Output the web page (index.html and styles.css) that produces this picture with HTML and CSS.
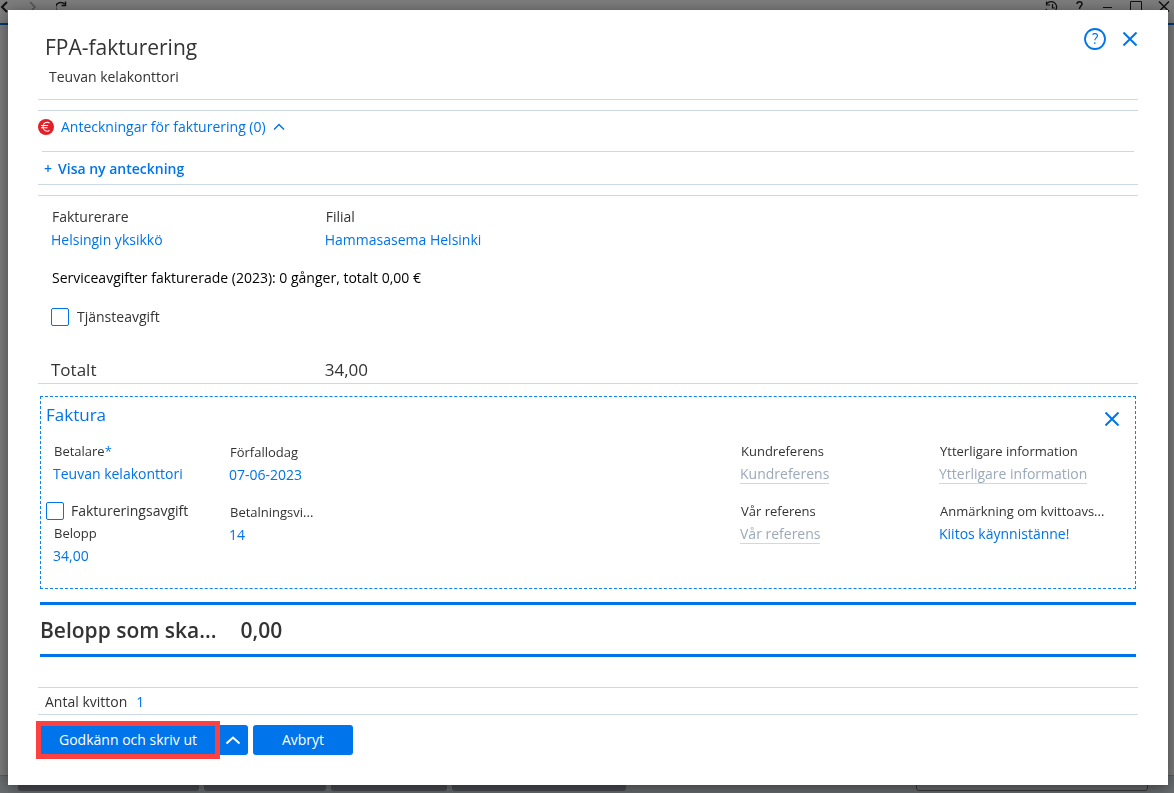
FILE: index.html
```html
<!DOCTYPE html>
<html lang="sv">
<head>
<meta charset="UTF-8">
<meta name="viewport" content="width=device-width, initial-scale=1">
<title>FPA-fakturering</title>
<link rel="stylesheet" href="styles.css">
</head>
<body>
    <!-- Application window behind the dialog -->
    <div class="app">
        <div class="toolbar">
            <div class="toolbar-nav">
                <svg width="14" height="14" viewBox="0 0 14 14"><path d="M7 2 2 7l5 5" stroke-width="2"/></svg>
                <svg class="muted" width="14" height="14" viewBox="0 0 14 14"><path d="m2 2 5 5-5 5"/></svg>
                <svg width="14" height="14" viewBox="0 0 14 14"><path d="M8.500 11.500A5.300 5.300 0 1 1 8.500 4M9.500 1.500v4H5.500"/></svg>
            </div>
            <div class="toolbar-window">
                <svg width="14" height="14" viewBox="0 0 14 14"><path d="M3 3.500A5.500 5.500 0 1 1 2 9M2.500 1.500V5H6M8.500 4v4H11" stroke-width="1.200"/></svg>
                <svg width="14" height="14" viewBox="0 0 14 14"><path d="M5 4c0-3 5-3 5-.3C10 6 7.500 6 7.500 9"/></svg>
                <svg width="14" height="14" viewBox="0 0 14 14"><path d="M3 7.500h9" stroke-width="1"/></svg>
                <svg width="14" height="14" viewBox="0 0 14 14"><path d="M2.500 1.500h11v11h-11z" stroke-width="1"/></svg>
                <svg width="14" height="14" viewBox="0 0 14 14"><path d="m3 1.500 10 10M13 1.500 3 11.500"/></svg>
            </div>
        </div>
        <div class="workspace"></div>
        <div class="taskbar">
            <div class="tab tab-1"></div>
            <div class="tab tab-2"></div>
            <div class="tab tab-3"></div>
            <div class="tab tab-4"></div>
            <div class="search-box"></div>
        </div>
    </div>

    <div class="overlay">
        <div class="dialog" role="dialog" aria-labelledby="dialog-title">
            <header class="dialog-header">
                <div>
                    <h1 id="dialog-title">FPA-fakturering</h1>
                    <p class="subtitle">Teuvan kelakonttori</p>
                </div>
                <div class="header-buttons">
                    <button type="button" class="icon-btn" aria-label="Hjälp">
                        <svg width="22" height="22" viewBox="0 0 22 22"><circle cx="11" cy="11" r="10" stroke-width="1.800"/><path d="M8.500 6.700c1.300-1.800 5-1.500 5 1 0 2-2.700 2.300-2.700 4.600M10.800 14.200v1.700" stroke-width="1.200"/></svg>
                    </button>
                    <button type="button" class="icon-btn" aria-label="Stäng">
                        <svg width="14" height="14" viewBox="0 0 14 14"><path d="m.5.5 13 13M13.500.5l-13 13" stroke-width="2"/></svg>
                    </button>
                </div>
            </header>

            <!-- Notes -->
            <section class="notes">
                <button type="button" class="notes-toggle">
                    <svg width="16" height="16" viewBox="0 0 16 16"><circle cx="8" cy="8" r="8" fill="#e3202a" stroke="none"/><path d="M11.500 4C8.500 2.300 5 4 5 7.700s3.500 5.500 6.500 3.800M3 6.500h7M3 8.800h6.500" stroke="#fff" stroke-width="1.100"/></svg>
                    <span>Anteckningar för fakturering (0)</span>
                    <svg width="12" height="8" viewBox="0 0 12 8"><path d="m1 6.500 5-5 5 5" stroke-width="1.500"/></svg>
                </button>
                <div class="notes-new">
                    <button type="button" class="link-btn"><span>+</span><span>Visa ny anteckning</span></button>
                </div>
            </section>

            <!-- Biller -->
            <section class="biller">
                <div class="biller-row">
                    <div class="field">
                        <span class="label">Fakturerare</span>
                        <a href="#" class="value">Helsingin yksikkö</a>
                    </div>
                    <div class="field">
                        <span class="label">Filial</span>
                        <a href="#" class="value">Hammasasema Helsinki</a>
                    </div>
                </div>
                <p class="service-fees">Serviceavgifter fakturerade (2023): 0 gånger, totalt 0,00 €</p>
                <label class="check"><input type="checkbox"> Tjänsteavgift</label>
                <div class="biller-row total">
                    <span>Totalt</span>
                    <span>34,00</span>
                </div>
            </section>

            <!-- Invoice -->
            <section class="invoice">
                <div class="invoice-header">
                    <h2>Faktura</h2>
                    <button type="button" class="icon-btn" aria-label="Ta bort faktura">
                        <svg width="14" height="14" viewBox="0 0 14 14"><path d="m.5.5 13 13M13.500.5l-13 13" stroke-width="2"/></svg>
                    </button>
                </div>
                <div class="invoice-grid">
                    <div class="col col-payer">
                        <div class="field small">
                            <span class="label">Betalare<span class="required">*</span></span>
                            <a href="#" class="value">Teuvan kelakonttori</a>
                        </div>
                        <label class="check"><input type="checkbox"> Faktureringsavgift</label>
                        <div class="field small">
                            <label class="label" for="amount">Belopp</label>
                            <input class="value" id="amount" type="text" value="34,00">
                        </div>
                    </div>
                    <div class="col col-dates">
                        <div class="field small">
                            <label class="label" for="due">Förfallodag</label>
                            <input class="value" id="due" type="text" value="07-06-2023">
                        </div>
                        <div class="field small">
                            <label class="label" for="terms">Betalningsvi...</label>
                            <input class="value" id="terms" type="text" value="14">
                        </div>
                    </div>
                    <div class="col">
                        <div class="field small">
                            <label class="label" for="customer-ref">Kundreferens</label>
                            <input class="value" id="customer-ref" type="text" placeholder="Kundreferens">
                        </div>
                        <div class="field small">
                            <label class="label" for="our-ref">Vår referens</label>
                            <input class="value" id="our-ref" type="text" placeholder="Vår referens">
                        </div>
                    </div>
                    <div class="col">
                        <div class="field small">
                            <label class="label" for="info">Ytterligare information</label>
                            <input class="value" id="info" type="text" placeholder="Ytterligare information">
                        </div>
                        <div class="field small">
                            <label class="label" for="remark">Anmärkning om kvittoavs...</label>
                            <input class="value" id="remark" type="text" value="Kiitos käynnistänne!">
                        </div>
                    </div>
                </div>
            </section>

            <div class="amount-due">
                <span>Belopp som ska...</span>
                <span>0,00</span>
            </div>

            <div class="receipts">
                <label for="receipts">Antal kvitton</label>
                <input class="value" id="receipts" type="text" value="1">
            </div>

            <div class="actions">
                <div class="split-btn">
                    <button type="button" class="btn btn-main">Godkänn och skriv ut</button>
                    <button type="button" class="btn btn-arrow" aria-label="Fler alternativ">
                        <svg width="16" height="10" viewBox="0 0 16 10"><path d="m1.500 8.500 6.500-6 6.500 6" stroke-width="2"/></svg>
                    </button>
                </div>
                <button type="button" class="btn btn-cancel">Avbryt</button>
            </div>
        </div>
    </div>
</body>
</html>
```
FILE: styles.css
```css
* {
    box-sizing: border-box;
}

body {
    margin: 0;
    font-family: "Open Sans", "Noto Sans", sans-serif;
    font-size: 14px;
    line-height: 20px;
    color: #333;
}

h1, h2, p {
    margin: 0;
    font-weight: 400;
}

button, input {
    font: inherit;
    color: inherit;
}

button {
    padding: 0;
    border: none;
    background: none;
    cursor: pointer;
}

svg {
    display: block;
    flex: none;
    fill: none;
    stroke: currentColor;
    stroke-width: 1.5;
}

/* Application window */
.app {
    position: fixed;
    inset: 0;
    display: flex;
    flex-direction: column;
    background-color: #fff;
    overflow: hidden;
}

.toolbar {
    display: flex;
    justify-content: space-between;
    height: 25px;
    padding: 0 4px 0 0;
    border-bottom: 2px solid #0074eb;
    color: #222;
}

.toolbar-nav,
.toolbar-window {
    display: flex;
    gap: 14px;
}

.toolbar-nav .muted {
    color: #aaa;
}

.workspace {
    flex: 1;
}

.taskbar {
    display: flex;
    gap: 5px;
    height: 18px;
    padding: 0 26px 2px 18px;
    background-color: #d6dee4;
    border-top: 1px solid #b8c3cc;
}

.tab {
    border-radius: 3px;
    background-color: #9499a6;
}

.tab-1 { width: 181px; }
.tab-2 { width: 122px; }
.tab-3 { width: 116px; }
.tab-4 { width: 174px; }

.search-box {
    width: 232px;
    margin-left: auto;
    border: 1px solid #777;
    border-radius: 3px;
}

/* Dialog */
.overlay {
    position: relative;
    display: flex;
    min-height: 100vh;
    padding: 10px 6px 8px 8px;
    background-color: rgba(0, 0, 0, 0.5);
}

.dialog {
    flex: 1;
    padding: 0 30px 30px;
    background-color: #fff;
    box-shadow: 0 3px 16px rgba(0, 0, 0, 0.5);
}

.dialog-header {
    display: flex;
    justify-content: space-between;
    padding: 23px 0 12px 7px;
    border-bottom: 1px solid #cdd9e5;
}

.dialog-header h1 {
    font-size: 21px;
    line-height: 28px;
}

.subtitle {
    margin-top: 6px;
    padding-left: 4px;
}

.header-buttons {
    display: flex;
    gap: 13px;
    height: 12px;
    margin-right: -3px;
    align-items: center;
}

.icon-btn {
    display: flex;
    align-items: center;
    justify-content: center;
    width: 22px;
    height: 22px;
    color: #0074eb;
}

/* Notes */
.notes {
    margin-top: 10px;
    border-top: 1px solid #cdd9e5;
    border-bottom: 1px solid #cdd9e5;
}

.notes-toggle {
    display: flex;
    align-items: center;
    gap: 7px;
    padding: 6px 0 14px;
    color: #0074eb;
}

.notes-new {
    margin: 0 4px;
    padding: 7px 2px 5px;
    border-top: 1px solid #cdd9e5;
}

.link-btn {
    display: flex;
    gap: 6px;
    color: #0074eb;
    font-weight: 600;
}

/* Biller */
.biller {
    margin-top: 10px;
    padding: 11px 0 0 13px;
    border-top: 1px solid #cdd9e5;
    border-bottom: 1px solid #cdd9e5;
}

.biller-row {
    display: grid;
    grid-template-columns: 34fr 101fr;
}

.field {
    display: flex;
    flex-direction: column;
    align-items: flex-start;
    gap: 3px;
}

.label {
    padding-left: 1px;
    white-space: nowrap;
}

.small .label {
    font-size: 13px;
}

.value {
    color: #0074eb;
    text-decoration: none;
}

input.value {
    field-sizing: content;
    height: 20px;
    padding: 0;
    border: none;
    border-bottom: 1px solid transparent;
    background: none;
}

input.value:placeholder-shown {
    border-bottom-color: #cdd9e5;
}

input::placeholder {
    color: #9ba9b9;
    opacity: 1;
}

.service-fees {
    margin: 18px 0 19px;
    padding-left: 1px;
    color: #000;
}

.check {
    display: flex;
    align-items: center;
    gap: 8px;
}

.check input {
    appearance: none;
    width: 18px;
    height: 18px;
    margin: 0;
    border: 1px solid #0074eb;
    border-radius: 2px;
    background-color: #fff;
}

.total {
    margin-top: 31px;
    padding-bottom: 1px;
    font-size: 17px;
    line-height: 24px;
}

/* Invoice */
.invoice {
    margin: 12px 2px 0;
    padding: 6px 5px 22px;
    border: 1px dashed #0a84f0;
}

.invoice-header {
    display: flex;
    justify-content: space-between;
    align-items: flex-start;
    height: 24px;
    padding-right: 7px;
    color: #0074eb;
}

.invoice-header .icon-btn {
    margin-top: 5px;
}

.invoice-header h2 {
    font-size: 17px;
    line-height: 24px;
}

.invoice-grid {
    display: grid;
    grid-template-columns: 183fr 511fr 199fr 191fr;
    margin-top: 14px;
}

.col {
    display: flex;
    flex-direction: column;
    gap: 17px;
    min-width: 0;
}

.col-payer {
    gap: 2px;
}

.col-payer .field {
    padding-left: 7px;
}

.col-payer .check {
    margin-top: 15px;
    gap: 7px;
}

.col-dates {
    padding-top: 1px;
}

.required {
    color: #0074eb;
}

/* Amount due */
.amount-due {
    display: flex;
    gap: 24px;
    margin: 13px 2px 0;
    padding: 11px 0 10px;
    border-top: 3px solid #0074eb;
    border-bottom: 3px solid #0074eb;
    font-size: 21px;
    font-weight: 600;
    line-height: 28px;
}

.receipts {
    display: flex;
    gap: 9px;
    margin-top: 30px;
    padding: 4px 0 2px 7px;
    border-top: 1px solid #cdd9e5;
    border-bottom: 1px solid #cdd9e5;
}

/* Buttons */
.actions {
    display: flex;
    gap: 5px;
    margin-top: 10px;
}

.split-btn {
    position: relative;
    display: flex;
}

/* Highlight frame over the main button */
.split-btn::before {
    content: "";
    position: absolute;
    top: -4px;
    bottom: -4px;
    left: -2px;
    right: 28px;
    border: 5px solid #fd4141;
    pointer-events: none;
}

.btn {
    display: flex;
    align-items: center;
    justify-content: center;
    height: 30px;
    border-radius: 3px;
    background-color: #0074eb;
    color: #fff;
}

.btn-main {
    width: 180px;
    border-radius: 3px 0 0 3px;
}

.btn-arrow {
    width: 30px;
    border-radius: 0 3px 3px 0;
}

.btn-cancel {
    width: 100px;
}
```
